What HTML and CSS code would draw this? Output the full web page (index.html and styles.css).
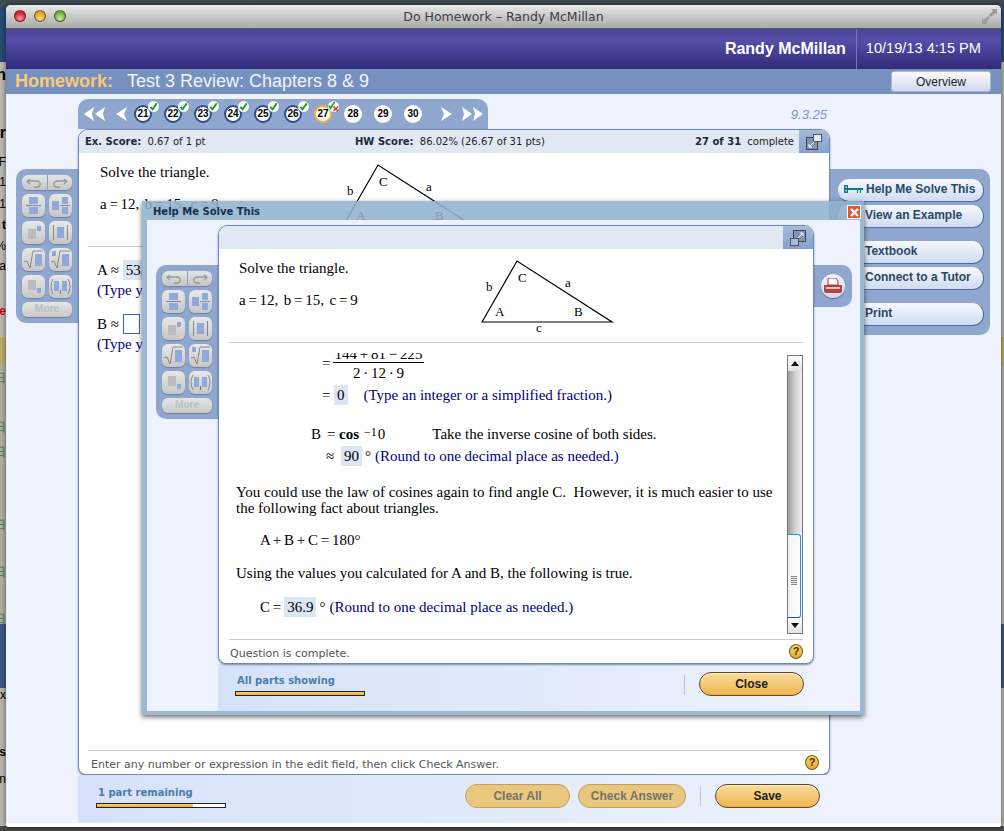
FILE: index.html
```html
<!DOCTYPE html>
<html lang="en">
<head>
    <meta charset="UTF-8">
    <title>Do Homework - Randy McMillan</title>
    <link rel="stylesheet" href="styles.css">
</head>
<body>
    <svg class="defs" width="0" height="0">
        <symbol id="check" viewBox="0 0 12 12"><path d="M2.5 6.5 L5 9 L9.5 2.5" fill="none" stroke="#12a012" stroke-width="2"/></symbol>
        <symbol id="frac" viewBox="0 0 23 23"><rect x="7" y="3" width="9" height="7" fill="#8fa9dd"/><rect x="4" y="11" width="15" height="1" fill="#888"/><rect x="7" y="13" width="9" height="7" fill="#8fa9dd"/></symbol>
        <symbol id="mixed" viewBox="0 0 23 23"><rect x="3" y="7" width="7" height="9" fill="#8fa9dd"/><rect x="13" y="3" width="6" height="7" fill="#8fa9dd"/><rect x="11" y="11" width="10" height="1" fill="#888"/><rect x="13" y="13" width="6" height="7" fill="#8fa9dd"/></symbol>
        <symbol id="power" viewBox="0 0 23 23"><rect x="6" y="8" width="8" height="10" fill="#bcbcbc"/><rect x="15" y="5" width="4" height="5" fill="#8fa9dd"/></symbol>
        <symbol id="abs" viewBox="0 0 23 23"><rect x="4" y="4" width="1" height="15" fill="#888"/><rect x="8" y="6" width="7" height="11" fill="#8fa9dd"/><rect x="18" y="4" width="1" height="15" fill="#888"/></symbol>
        <symbol id="sqrt" viewBox="0 0 23 23"><path d="M2 14 L5 13 L8 20 L11 3 H21" fill="none" stroke="#888"/><rect x="13" y="6" width="7" height="12" fill="#8fa9dd"/></symbol>
        <symbol id="root" viewBox="0 0 23 23"><rect x="3" y="3" width="4" height="5" fill="#8fa9dd"/><path d="M2 14 L5 13 L8 20 L11 3 H21" fill="none" stroke="#888"/><rect x="13" y="6" width="7" height="12" fill="#8fa9dd"/></symbol>
        <symbol id="sub" viewBox="0 0 23 23"><rect x="6" y="5" width="8" height="10" fill="#bcbcbc"/><rect x="15" y="13" width="4" height="5" fill="#8fa9dd"/></symbol>
        <symbol id="pair" viewBox="0 0 23 23"><path d="M4 4 Q0 11 4 19 M19 4 Q23 11 19 19" fill="none" stroke="#888"/><rect x="5" y="6" width="5" height="10" fill="#8fa9dd"/><rect x="13" y="6" width="5" height="10" fill="#8fa9dd"/><rect x="11" y="15" width="1" height="4" fill="#777"/></symbol>
        <symbol id="undo" viewBox="0 0 20 12"><path d="M6 2 L3 4 L6 7 M3 4 H12 Q17 4 16 8 Q15 11 10 10" fill="none" stroke="#9a9a9a" stroke-width="1.4"/></symbol>
        <symbol id="redo" viewBox="0 0 20 12"><path d="M14 2 L17 4 L14 7 M17 4 H8 Q3 4 4 8 Q5 11 10 10" fill="none" stroke="#9a9a9a" stroke-width="1.4"/></symbol>
        <symbol id="triangle" viewBox="0 0 140 75">
            <path d="M4 64 L39 3 L134 64 Z" fill="none" stroke="#000" stroke-width="1.2"/>
            <text x="8" y="33">b</text>
            <text x="40" y="24">C</text>
            <text x="87" y="29">a</text>
            <text x="17" y="58">A</text>
            <text x="96" y="58">B</text>
            <text x="58" y="74">c</text>
        </symbol>
        <symbol id="shrink" viewBox="0 0 16 16"><rect x="0.5" y="3.5" width="11" height="12" fill="#8194b3" stroke="#3c4658"/><path d="M3 13 L8 8 M3 13 V10 M3 13 H6" fill="none" stroke="#fff"/><rect x="7.5" y="0.5" width="8" height="7" fill="#e8eef7" stroke="#4c5566"/></symbol>
        <symbol id="grow" viewBox="0 0 16 16"><rect x="3.5" y="0.5" width="12" height="11" fill="#8194b3" stroke="#3c4658"/><path d="M13 3 L8 8 M13 3 V6 M13 3 H10" fill="none" stroke="#fff"/><rect x="0.5" y="8.5" width="8" height="7" fill="#a9bcd8" stroke="#4c5566"/></symbol>
    </svg>

    <div class="strip strip-left">
        <span class="frag frag-n">n</span>
        <span class="frag frag-r">r</span>
        <span class="frag frag-f">F</span>
        <span class="frag frag-1">1</span>
        <span class="frag frag-2">1</span>
        <span class="frag frag-t">t</span>
        <span class="frag frag-pct">%</span>
        <span class="frag frag-a">a</span>
        <span class="frag frag-red">fe</span>
        <span class="frag frag-g1">日</span>
        <span class="frag frag-g2">日</span>
        <span class="frag frag-g3">日</span>
        <span class="frag frag-g4">日</span>
        <span class="frag frag-g5">日</span>
        <span class="frag frag-g6">日</span>
        <span class="frag frag-ex">ex</span>
        <span class="frag frag-s">s</span>
        <span class="frag frag-m">n</span>
    </div>

    <div class="window">
        <div class="titlebar">
            <div class="lights">
                <span class="light light-red"></span>
                <span class="light light-yellow"></span>
                <span class="light light-green"></span>
            </div>
            <span class="title">Do Homework &ndash; Randy McMillan</span>
            <svg class="fullscreen" width="15" height="15" viewBox="0 0 15 15">
                <path d="M15 0 H9 L11 2 L7 6 L9 8 L13 4 L15 6 Z M0 15 H6 L4 13 L8 9 L6 7 L2 11 L0 9 Z" fill="#9b9b9b"/>
            </svg>
        </div>

        <div class="topbar">
            <span class="user">Randy McMillan</span>
            <span class="clock">10/19/13 4:15 PM</span>
        </div>

        <div class="hwbar">
            <span class="hw-label">Homework:</span>
            <span class="hw-name">Test 3 Review: Chapters 8 &amp; 9</span>
            <button class="overview">Overview</button>
        </div>

        <div class="hw-body">
            <div class="side-left">
                <div class="palette">
                    <div class="undo-pair">
                        <span class="undo-btn"><svg width="20" height="12"><use href="#undo"/></svg></span>
                        <span class="undo-btn"><svg width="20" height="12"><use href="#redo"/></svg></span>
                    </div>
                    <div class="tool-grid">
                        <span class="tool"><svg width="23" height="23"><use href="#frac"/></svg></span>
                        <span class="tool"><svg width="23" height="23"><use href="#mixed"/></svg></span>
                        <span class="tool"><svg width="23" height="23"><use href="#power"/></svg></span>
                        <span class="tool"><svg width="23" height="23"><use href="#abs"/></svg></span>
                        <span class="tool"><svg width="23" height="23"><use href="#sqrt"/></svg></span>
                        <span class="tool"><svg width="23" height="23"><use href="#root"/></svg></span>
                        <span class="tool"><svg width="23" height="23"><use href="#sub"/></svg></span>
                        <span class="tool"><svg width="23" height="23"><use href="#pair"/></svg></span>
                    </div>
                    <span class="more">More</span>
                </div>
            </div>

            <div class="center">
                <div class="nav-row">
                    <div class="qnav">
                        <svg class="arrow-dbl" width="21" height="14" viewBox="0 0 21 14"><path d="M0 7 L10 0 L8 7 L10 14 Z M11 7 L21 0 L19 7 L21 14 Z" fill="#fff"/></svg>
                        <svg class="arrow-one" width="11" height="14" viewBox="0 0 11 14"><path d="M0 7 L11 0 L8 7 L11 14 Z" fill="#fff"/></svg>
                        <span class="q done">21<span class="badge"><svg width="11" height="11"><use href="#check"/></svg></span></span>
                        <span class="q done">22<span class="badge"><svg width="11" height="11"><use href="#check"/></svg></span></span>
                        <span class="q done">23<span class="badge"><svg width="11" height="11"><use href="#check"/></svg></span></span>
                        <span class="q done">24<span class="badge"><svg width="11" height="11"><use href="#check"/></svg></span></span>
                        <span class="q done">25<span class="badge"><svg width="11" height="11"><use href="#check"/></svg></span></span>
                        <span class="q done">26<span class="badge"><svg width="11" height="11"><use href="#check"/></svg></span></span>
                        <span class="q current">27<span class="badge"><svg width="11" height="11" viewBox="0 0 12 12"><path d="M1 5 L3 8 L7 1" fill="none" stroke="#12a012" stroke-width="1.8"/><path d="M6 6 L11 11 M11 6 L6 11" stroke="#d8342c" stroke-width="1.6"/></svg></span></span>
                        <span class="q">28</span>
                        <span class="q">29</span>
                        <span class="q">30</span>
                        <svg class="arrow-next" width="11" height="14" viewBox="0 0 11 14"><path d="M11 7 L0 0 L3 7 L0 14 Z" fill="#fff"/></svg>
                        <svg class="arrow-last" width="21" height="14" viewBox="0 0 21 14"><path d="M10 7 L0 0 L2 7 L0 14 Z M21 7 L11 0 L13 7 L11 14 Z" fill="#fff"/></svg>
                    </div>
                    <span class="version">9.3.25</span>
                </div>

                <div class="panel">
                    <div class="panel-head">
                        <span class="score score-ex"><b>Ex. Score:</b> 0.67 of 1 pt</span>
                        <span class="score"><b>HW Score:</b> 86.02% (26.67 of 31 pts)</span>
                        <span class="score score-done"><b>27 of 31</b> complete</span>
                        <span class="expand"><svg width="16" height="16"><use href="#shrink"/></svg></span>
                    </div>
                    <div class="problem">
                        <div class="problem-text">
                            <p>Solve the triangle.</p>
                            <p class="givens tight">a = 12,&nbsp; b = 15,&nbsp; c = 9</p>
                        </div>
                        <svg class="tri" width="140" height="75"><use href="#triangle"/></svg>
                    </div>
                    <div class="answers">
                        <div class="answer-line">A &asymp; <span class="given-box">53.1</span>&deg;</div>
                        <div class="hint">(Type your answer in degrees. Round to one decimal place as needed.)</div>
                        <div class="answer-line answer-b">B &asymp; <span class="blank-box"></span></div>
                        <div class="hint">(Type your answer in degrees. Round to one decimal place as needed.)</div>
                    </div>
                    <div class="panel-foot">
                        <span>Enter any number or expression in the edit field, then click Check Answer.</span>
                        <span class="help-dot">?</span>
                    </div>
                </div>

                <div class="actions">
                    <div class="parts">
                        <span class="parts-label">1 part remaining</span>
                        <span class="meter"><span class="meter-fill meter-part"></span></span>
                    </div>
                    <button class="pill pill-off pill-clear">Clear All</button>
                    <button class="pill pill-off pill-check">Check Answer</button>
                    <span class="divider"></span>
                    <button class="pill pill-save">Save</button>
                </div>
            </div>

            <div class="side-right">
                <div class="helpers">
                    <a class="helper">
                        <svg class="key" width="20" height="10" viewBox="0 0 20 10"><path d="M5 1 H1 V9 H5 V6 H14 V9 H15 V6 H17 V9 H18 V6 H20 V4 H5 Z" fill="#0e7a86"/><rect x="2.5" y="2.5" width="1.2" height="1.4" fill="#fff"/><rect x="2.5" y="6" width="1.2" height="1.4" fill="#fff"/></svg>
                        Help Me Solve This
                    </a>
                    <a class="helper">View an Example</a>
                    <a class="helper helper-gap">Textbook</a>
                    <a class="helper">Connect to a Tutor</a>
                    <a class="helper helper-gap">Print</a>
                </div>
            </div>
        </div>
    </div>

    <div class="dialog">
        <div class="dialog-title">
            <span>Help Me Solve This</span>
            <span class="dialog-close"><svg width="11" height="11" viewBox="0 0 11 11"><path d="M2 2 L9 9 M9 2 L2 9" stroke="#fff" stroke-width="2.4"/></svg></span>
        </div>
        <div class="dialog-body">
            <div class="side-left dialog-left">
                <div class="palette">
                    <div class="undo-pair">
                        <span class="undo-btn"><svg width="20" height="12"><use href="#undo"/></svg></span>
                        <span class="undo-btn"><svg width="20" height="12"><use href="#redo"/></svg></span>
                    </div>
                    <div class="tool-grid">
                        <span class="tool"><svg width="23" height="23"><use href="#frac"/></svg></span>
                        <span class="tool"><svg width="23" height="23"><use href="#mixed"/></svg></span>
                        <span class="tool"><svg width="23" height="23"><use href="#power"/></svg></span>
                        <span class="tool"><svg width="23" height="23"><use href="#abs"/></svg></span>
                        <span class="tool"><svg width="23" height="23"><use href="#sqrt"/></svg></span>
                        <span class="tool"><svg width="23" height="23"><use href="#root"/></svg></span>
                        <span class="tool"><svg width="23" height="23"><use href="#sub"/></svg></span>
                        <span class="tool"><svg width="23" height="23"><use href="#pair"/></svg></span>
                    </div>
                    <span class="more">More</span>
                </div>
            </div>

            <div class="dialog-center">
                <div class="panel panel-dialog">
                    <div class="panel-head head-plain">
                        <span class="expand"><svg width="16" height="16"><use href="#grow"/></svg></span>
                    </div>
                    <div class="problem">
                        <div class="problem-text">
                            <p>Solve the triangle.</p>
                            <p class="givens tight">a = 12,&nbsp; b = 15,&nbsp; c = 9</p>
                        </div>
                        <svg class="tri" width="140" height="75"><use href="#triangle"/></svg>
                    </div>
                    <div class="scroller">
                        <div class="work">
                            <div class="work-row row-frac">
                                <span class="eq">=</span>
                                <span class="fraction tight">
                                    <span class="numer">144 + 81 &minus; 225</span>
                                    <span class="denom">2 &middot; 12 &middot; 9</span>
                                </span>
                            </div>
                            <div class="work-row row-zero">
                                <span class="eq">=</span><span class="value value-zero">0</span><span class="hint hint-zero">(Type an integer or a simplified fraction.)</span>
                            </div>
                            <div class="work-row row-b">
                                <span>B</span><span class="eq eq-b">=</span><b>cos</b><span class="inv">&minus;1</span><span class="arg">0</span><span class="note">Take the inverse cosine of both sides.</span>
                            </div>
                            <div class="work-row row-ninety">
                                <span class="approx">&asymp;</span><span class="value">90</span><span class="deg">&deg;</span><span class="hint">(Round to one decimal place as needed.)</span>
                            </div>
                            <p class="para">You could use the law of cosines again to find angle C.&nbsp; However, it is much easier to use<br>the following fact about triangles.</p>
                            <div class="work-row row-sum tight">A + B + C = 180&deg;</div>
                            <div class="work-row row-using">Using the values you calculated for A and B, the following is true.</div>
                            <div class="work-row row-c">
                                <span class="tight">C =</span><span class="value value-c">36.9</span><span class="deg">&deg;</span><span class="hint">(Round to one decimal place as needed.)</span>
                            </div>
                        </div>
                        <div class="scrollbar">
                            <span class="sb-btn"><span class="sb-up"></span></span>
                            <span class="sb-track"></span>
                            <span class="sb-thumb"><span class="sb-grip"></span></span>
                            <span class="sb-btn"><span class="sb-down"></span></span>
                        </div>
                    </div>
                    <div class="panel-foot">
                        <span>Question is complete.</span>
                        <span class="help-dot">?</span>
                    </div>
                </div>
                <div class="actions actions-dialog">
                    <div class="parts">
                        <span class="parts-label">All parts showing</span>
                        <span class="meter"><span class="meter-fill"></span></span>
                    </div>
                    <span class="divider"></span>
                    <button class="pill pill-close">Close</button>
                </div>
            </div>

            <div class="dialog-right">
                <div class="print-tab">
                    <span class="print-btn">
                        <svg width="20" height="16" viewBox="0 0 20 16"><path d="M6 0 H13 L15 3 V7 H5 V1 Z" fill="#fff" stroke="#a33"/><path d="M1 7 H19 V13 Q19 15 17 15 H3 Q1 15 1 13 Z" fill="#b8403f"/><rect x="3" y="9" width="14" height="2" fill="#e8c8c8"/></svg>
                    </span>
                </div>
            </div>
        </div>
    </div>
</body>
</html>
```

FILE: styles.css
```css
* {
    box-sizing: border-box;
}
html, body {
    margin: 0;
    height: 100%;
}
body {
    width: 1004px;
    height: 831px;
    position: relative;
    overflow: hidden;
    font-family: 'Liberation Serif', serif;
    font-size: 15px;
    color: #000;
    background: linear-gradient(to bottom,
        #3c4a50 0, #3c4a50 8px,
        #274a70 8px, #274a70 62px,
        #b6b6ae 62px, #b6b6ae 337px,
        #b7a96b 337px, #b7a96b 365px,
        #acaca2 365px, #acaca2 624px,
        #3d5585 624px, #3d5585 688px,
        #b4b4ac 688px, #b4b4ac 826px,
        #454545 826px);
}
.defs {
    position: absolute;
}
.tight {
    word-spacing: -1px;
}

/* bits of the page behind the window */
.strip-left {
    position: absolute;
    left: 0;
    top: 0;
    width: 6px;
    height: 831px;
    overflow: hidden;
    font-family: 'Liberation Sans', sans-serif;
    font-size: 12px;
}
.frag {
    position: absolute;
    right: 0;
    line-height: 12px;
}
.frag-n { top: 69px; font-weight: bold; font-size: 16px; }
.frag-r { top: 127px; font-weight: bold; font-size: 16px; }
.frag-f { top: 156px; }
.frag-1 { top: 176px; }
.frag-2 { top: 198px; }
.frag-t { top: 219px; font-weight: bold; }
.frag-pct { top: 240px; }
.frag-a { top: 260px; }
.frag-red { top: 305px; color: #d00018; font-weight: bold; }
.frag-g1 { top: 372px; color: #3f7a50; }
.frag-g2 { top: 421px; color: #3f7a50; }
.frag-g3 { top: 446px; color: #3f7a50; }
.frag-g4 { top: 519px; color: #3f7a50; }
.frag-g5 { top: 566px; color: #3f7a50; }
.frag-g6 { top: 613px; color: #3f7a50; }
.frag-ex { top: 689px; }
.frag-s { top: 746px; font-weight: bold; }
.frag-m { top: 773px; }

.window {
    position: absolute;
    left: 6px;
    top: 5px;
    width: 995px;
    height: 822px;
    display: flex;
    flex-direction: column;
    border-radius: 5px 5px 3px 3px;
    overflow: hidden;
    background: #fff;
    box-shadow: 0 0 4px rgba(0, 0, 0, 0.6);
}
.titlebar {
    height: 24px;
    flex: none;
    display: flex;
    align-items: center;
    justify-content: center;
    position: relative;
    background: linear-gradient(to bottom, #e9e9e9, #a9a9a9);
    border-bottom: 1px solid #5a5a5a;
}
.lights {
    position: absolute;
    left: 8px;
    top: 5px;
    display: flex;
    gap: 8px;
}
.light {
    width: 12px;
    height: 12px;
    border-radius: 50%;
    border: 1px solid rgba(0, 0, 0, 0.45);
}
.light-red { background: radial-gradient(circle at 50% 75%, #ff9a9a, #d3232a 65%); }
.light-yellow { background: radial-gradient(circle at 50% 75%, #ffe39a, #d99a1e 65%); }
.light-green { background: radial-gradient(circle at 50% 75%, #d0f3a0, #6aa93a 65%); }
.title {
    font-family: 'DejaVu Sans', sans-serif;
    font-size: 12.5px;
    color: #3c3c3c;
}
.fullscreen {
    position: absolute;
    right: 4px;
    top: 4px;
}

.topbar {
    height: 40px;
    flex: none;
    display: flex;
    align-items: center;
    justify-content: flex-end;
    background: linear-gradient(to bottom, #4a4596, #544ea8 30%, #2f2a78);
    color: #fff;
    font-family: 'Liberation Sans', sans-serif;
}
.user {
    font-size: 16px;
    font-weight: bold;
    padding-right: 10px;
}
.clock {
    height: 40px;
    line-height: 39px;
    padding: 0 20px 0 9px;
    font-size: 14.6px;
    border-left: 1px solid #7a76b8;
}

.hwbar {
    height: 25px;
    flex: none;
    display: flex;
    align-items: center;
    padding: 0 10px 0 9px;
    background: #7690c0;
    font-family: 'Liberation Sans', sans-serif;
    font-size: 18px;
}
.hw-label {
    color: #fbcb72;
    font-weight: bold;
    margin-right: 14px;
}
.hw-name {
    color: #f1f5fd;
}
.overview {
    margin-left: auto;
    width: 100px;
    height: 21px;
    padding: 0;
    border: 1px solid #aeb7d6;
    border-radius: 3px;
    background: linear-gradient(to bottom, #fbfbff, #d4d7f0);
    font-family: 'Liberation Sans', sans-serif;
    font-size: 12px;
    color: #222;
}

.hw-body {
    flex: 1;
    min-height: 0;
    display: flex;
    background: #edf2fc;
    border-bottom: 4px solid #fff;
}
.side-left {
    width: 72px;
    flex: none;
    padding: 75px 0 0 10px;
}
.palette {
    width: 62px;
    height: 154px;
    padding: 6px;
    background: #8fa7cf;
    border-radius: 10px 0 0 10px;
    display: flex;
    flex-direction: column;
}
.undo-pair {
    display: flex;
    height: 15px;
    gap: 1px;
}
.undo-btn {
    flex: 1;
    display: flex;
    align-items: center;
    justify-content: center;
    background: linear-gradient(to bottom, #e6e6e6, #c4c4c4);
    box-shadow: 0 1px 1px #6d7f9c;
}
.undo-btn:first-child {
    border-radius: 6px 0 0 6px;
}
.undo-btn:last-child {
    border-radius: 0 6px 6px 0;
}
.tool-grid {
    display: grid;
    grid-template-columns: 23px 23px;
    grid-auto-rows: 23px;
    gap: 4px;
    margin-top: 4px;
}
.tool {
    display: block;
    height: 23px;
    border-radius: 6px;
    background: linear-gradient(to bottom, #e8e8e8, #c6c6c6);
    box-shadow: 0 1px 1px #6d7f9c;
}
.tool svg {
    display: block;
}
.more {
    margin-top: 4px;
    height: 15px;
    line-height: 14px;
    text-align: center;
    border-radius: 6px;
    background: linear-gradient(to bottom, #e6e6e6, #c8c8c8);
    box-shadow: 0 1px 1px #6d7f9c;
    font-family: 'Liberation Sans', sans-serif;
    font-size: 10px;
    font-weight: bold;
    color: #b6c2c4;
}

.center {
    width: 752px;
    flex: none;
    display: flex;
    flex-direction: column;
}
.nav-row {
    height: 35px;
    flex: none;
    display: flex;
    justify-content: space-between;
    align-items: flex-end;
}
.qnav {
    width: 410px;
    height: 30px;
    display: flex;
    align-items: center;
    padding-left: 6px;
    background: #8fa7cf;
    border-radius: 10px 10px 0 0;
}
.arrow-dbl { margin-right: 11px; }
.arrow-one { margin-right: 7px; }
.arrow-next { margin-left: 19px; margin-right: 10px; }
.q {
    position: relative;
    width: 18px;
    height: 18px;
    margin-right: 12px;
    border-radius: 50%;
    background: #fff;
    font-family: 'Liberation Sans', sans-serif;
    font-size: 10px;
    font-weight: bold;
    line-height: 18px;
    text-align: center;
}
.q.done {
    border: 2px solid #2f4d8d;
    line-height: 14px;
}
.q.current {
    border: 2px solid #f6b13c;
    line-height: 14px;
}
.q:nth-last-child(3) {
    margin-right: 0;
}
.badge {
    position: absolute;
    left: 12px;
    top: -6px;
    width: 11px;
    height: 11px;
    border-radius: 50%;
    background: #fff;
    box-shadow: 0 0 1px #6e7f9f;
}
.badge svg {
    display: block;
}
.version {
    align-self: center;
    padding: 6px 3px 0 0;
    font-family: 'Liberation Sans', sans-serif;
    font-size: 13px;
    font-style: italic;
    color: #7b96cb;
}

.panel {
    height: 646px;
    flex: none;
    display: flex;
    flex-direction: column;
    background: #fff;
    border: 1px solid #6f88b5;
    border-radius: 10px 10px 8px 8px;
    box-shadow: 0 1px 2px rgba(60, 80, 120, 0.6);
    overflow: hidden;
}
.panel-head {
    height: 23px;
    flex: none;
    display: flex;
    align-items: center;
    padding-left: 6px;
    background: #e1e8f2;
    font-family: 'DejaVu Sans', sans-serif;
    font-size: 10px;
    color: #222;
}
.head-plain {
    justify-content: flex-end;
}
.score b {
    color: #1a2a3a;
    margin-right: 3px;
}
.score-ex {
    width: 270px;
}
.score-done {
    margin-left: auto;
    margin-right: 5px;
}
.expand {
    width: 30px;
    height: 23px;
    display: flex;
    align-items: center;
    justify-content: center;
    background: linear-gradient(to bottom, #a5bbdb, #84a0cd);
}
.problem {
    height: 94px;
    flex: none;
    margin: 0 10px;
    padding: 9px 0 0 11px;
    display: flex;
    border-bottom: 1px solid #ccc;
}
.panel-dialog .problem {
    padding-left: 10px;
}
.problem p {
    margin: 0;
    line-height: 20px;
}
.problem-text {
    width: 239px;
}
.givens {
    margin-top: 12px !important;
}
.tri {
    flex: none;
    font-family: 'Liberation Serif', serif;
    font-size: 13px;
}
.answers {
    flex: 1;
    padding: 13px 0 0 18px;
    white-space: nowrap;
}
.answer-line {
    height: 20px;
    line-height: 20px;
}
.answer-b {
    margin-top: 13px;
}
.given-box {
    display: inline-block;
    height: 20px;
    padding: 0 3px;
    background: #dce5f3;
}
.blank-box {
    display: inline-block;
    width: 17px;
    height: 20px;
    vertical-align: top;
    border: 1px solid #3d63b8;
    background: #fff;
}
.answers .hint {
    line-height: 21px;
}
.hint {
    color: #000080;
}
.panel-foot {
    height: 24px;
    flex: none;
    margin: 0 10px;
    padding: 0 0 0 2px;
    display: flex;
    align-items: center;
    justify-content: space-between;
    border-top: 1px solid #ccc;
    font-family: 'DejaVu Sans', sans-serif;
    font-size: 11px;
    color: #555;
}
.panel-foot > span:first-child {
    padding-top: 3px;
}
.panel-dialog .panel-foot {
    padding-left: 1px;
}
.help-dot {
    width: 14px;
    height: 15px;
    line-height: 13px;
    text-align: center;
    border: 1px solid #7a5a12;
    border-radius: 50%;
    background: linear-gradient(to bottom, #fbd66c, #eaa92f);
    font-family: 'Liberation Sans', sans-serif;
    font-size: 11px;
    font-weight: bold;
    color: #4a3208;
}

.actions {
    flex: 1;
    display: flex;
    align-items: center;
    padding: 0 10px 7px 18px;
    background: linear-gradient(to right, #d5e2f8, #edf2fc);
}
.parts {
    display: flex;
    flex-direction: column;
    width: 130px;
    margin: 3px auto 0 0;
    padding-bottom: 1px;
}
.parts-label {
    padding-left: 2px;
    font-family: 'DejaVu Sans', sans-serif;
    font-size: 10px;
    font-weight: bold;
    color: #4d7ca8;
    line-height: 14px;
}
.meter {
    height: 5px;
    margin-top: 3px;
    border: 1px solid #222;
    background: #fff;
}
.meter-fill {
    display: block;
    height: 100%;
    background: linear-gradient(to bottom, #fbd074, #f2ac30);
}
.meter-part {
    width: 75%;
}
.pill {
    height: 24px;
    padding: 0;
    border: 1px solid #5f4a18;
    border-radius: 12px;
    background: linear-gradient(to bottom, #f9dc9c, #eeb54e);
    font-family: 'Liberation Sans', sans-serif;
    font-size: 12px;
    font-weight: bold;
    color: #1d1d1d;
    box-shadow: inset 0 1px 1px rgba(255, 255, 255, 0.6);
}
.pill-off {
    border-color: #c0a060;
    background: #eac77f;
    color: #75726a;
    box-shadow: none;
}
.pill-clear {
    width: 105px;
    margin-right: 8px;
}
.pill-check {
    width: 108px;
}
.pill-save {
    width: 105px;
}
.pill-close {
    width: 105px;
}
.divider {
    width: 1px;
    height: 20px;
    margin: 0 14px;
    background: #b8c4d8;
}

.side-right {
    flex: 1;
    padding-top: 75px;
}
.helpers {
    width: 160px;
    height: 166px;
    padding: 10px 6px 0 8px;
    background: #8fa7cf;
    border-radius: 0 10px 10px 0;
}
.helper {
    display: flex;
    align-items: center;
    height: 23px;
    margin-bottom: 3px;
    padding: 0 0 2px 5px;
    gap: 3px;
    border-radius: 11px;
    border-bottom: 1px solid #4f6d9c;
    border-right: 1px solid #4f6d9c;
    background: linear-gradient(to bottom, #f6f8fe, #cfdcf3);
    font-family: 'Liberation Sans', sans-serif;
    font-size: 12px;
    font-weight: bold;
    color: #2d4763;
    white-space: nowrap;
}
.helper:not(:first-child) {
    padding-left: 27px;
}
.helper-gap {
    margin-top: 13px;
}

/* Help Me Solve This popup */
.dialog {
    position: absolute;
    left: 142px;
    top: 201px;
    width: 722px;
    height: 514px;
    display: flex;
    flex-direction: column;
    z-index: 5;
    box-shadow: 0 2px 5px rgba(0, 0, 0, 0.6);
}
.dialog-title {
    height: 19px;
    flex: none;
    display: flex;
    align-items: center;
    justify-content: space-between;
    padding: 1px 3px 0 11px;
    background: rgba(146, 176, 205, 0.88);
    font-family: 'DejaVu Sans', sans-serif;
    font-size: 10px;
    font-weight: bold;
    color: #16304a;
}
.dialog-close {
    width: 14px;
    height: 14px;
    display: flex;
    align-items: center;
    justify-content: center;
    border: 1px solid #fff;
    background: #d9593a;
    margin-top: 2px;
}
.dialog-body {
    flex: 1;
    min-height: 0;
    display: flex;
    background: #edf2fc;
    border-left: 5px solid #9db8d3;
    border-right: 4px solid #9db8d3;
    border-bottom: 4px solid #9db8d3;
}
.dialog-left {
    width: 71px;
    padding: 45px 0 0 9px;
}
.dialog-center {
    width: 596px;
    flex: none;
    display: flex;
    flex-direction: column;
    padding-top: 5px;
}
.panel-dialog {
    height: 439px;
    z-index: 1;
}
.actions-dialog {
    padding: 0 10px 7px 17px;
}
.actions-dialog .divider {
    margin: 2px 14px 0 0;
}
.dialog-right {
    flex: 1;
    padding-top: 45px;
}
.print-tab {
    width: 38px;
    height: 42px;
    display: flex;
    align-items: center;
    justify-content: center;
    background: #8fa7cf;
    border-radius: 0 10px 10px 0;
}
.print-btn {
    width: 24px;
    height: 24px;
    display: flex;
    align-items: center;
    justify-content: center;
    border-radius: 50%;
    background: linear-gradient(to bottom, #f4f6fb, #cfd7e8);
    box-shadow: 0 1px 1px #55688a;
}
.scroller {
    flex: 1;
    min-height: 0;
    display: flex;
}
.work {
    flex: 1;
    min-width: 0;
    height: 281px;
    margin-top: 10px;
    padding-left: 17px;
    overflow: hidden;
    white-space: nowrap;
    line-height: 20px;
}
.work-row {
    display: flex;
    align-items: center;
    height: 20px;
}
.row-frac {
    height: auto;
    align-items: flex-start;
    margin-top: -7px;
    padding-left: 86px;
}
.row-frac .eq {
    margin-top: 7px;
    margin-right: 3px;
}
.eq {
    width: 8px;
}
.fraction {
    display: flex;
    flex-direction: column;
    width: 91px;
    text-align: center;
}
.numer {
    height: 17px;
    line-height: 16px;
    border-bottom: 1px solid #000;
}
.denom {
    height: 20px;
}
.value {
    height: 20px;
    padding: 0 3px;
    background: #dce5f3;
}
.row-zero {
    margin-top: 2px;
    padding-left: 86px;
}
.value-zero {
    margin-left: 4px;
}
.hint-zero {
    margin-left: 16px;
}
.row-b {
    margin-top: 19px;
    padding-left: 75px;
}
.eq-b {
    margin: 0 4px 0 6px;
}
.inv {
    align-self: flex-start;
    margin-left: 5px;
    font-size: 12px;
    line-height: 16px;
}
.arg {
    margin-left: 1px;
}
.note {
    margin-left: 47px;
}
.row-ninety {
    margin-top: 2px;
    padding-left: 90px;
}
.approx {
    width: 15px;
}
.deg {
    margin: 0 4px 0 3px;
}
.para {
    margin: 18px 0 0;
    line-height: 16px;
}
.row-sum {
    margin-top: 14px;
    padding-left: 24px;
}
.row-using {
    margin-top: 13px;
}
.row-c {
    margin-top: 14px;
    padding-left: 24px;
}
.value-c {
    margin-left: 3px;
}
.scrollbar {
    width: 16px;
    height: 279px;
    flex: none;
    margin: 12px 10px 0 0;
    display: flex;
    flex-direction: column;
    border: 1px solid #777;
    background: #f4f4f4;
}
.sb-btn {
    height: 15px;
    flex: none;
    display: flex;
    align-items: center;
    justify-content: center;
    background: linear-gradient(to bottom, #fff, #e2e2e2);
}
.sb-up {
    border-left: 4px solid transparent;
    border-right: 4px solid transparent;
    border-bottom: 5px solid #111;
}
.sb-down {
    border-left: 4px solid transparent;
    border-right: 4px solid transparent;
    border-top: 5px solid #111;
}
.sb-track {
    flex: 1;
    background: linear-gradient(to right, #9c9c9c, #d2d2d2 50%, #efefef);
}
.sb-thumb {
    height: 84px;
    flex: none;
    display: flex;
    align-items: center;
    justify-content: center;
    border: 1px solid #2a8df0;
    border-left: none;
    border-bottom-color: #1a4fa8;
    border-radius: 0 3px 3px 0;
    background: linear-gradient(to right, #f2f2f2, #fff);
    margin-right: 1px;
}
.sb-grip {
    width: 6px;
    height: 9px;
    background: repeating-linear-gradient(to bottom, #888 0, #888 1px, #eee 1px, #eee 2px);
    margin-top: 8px;
}
```
